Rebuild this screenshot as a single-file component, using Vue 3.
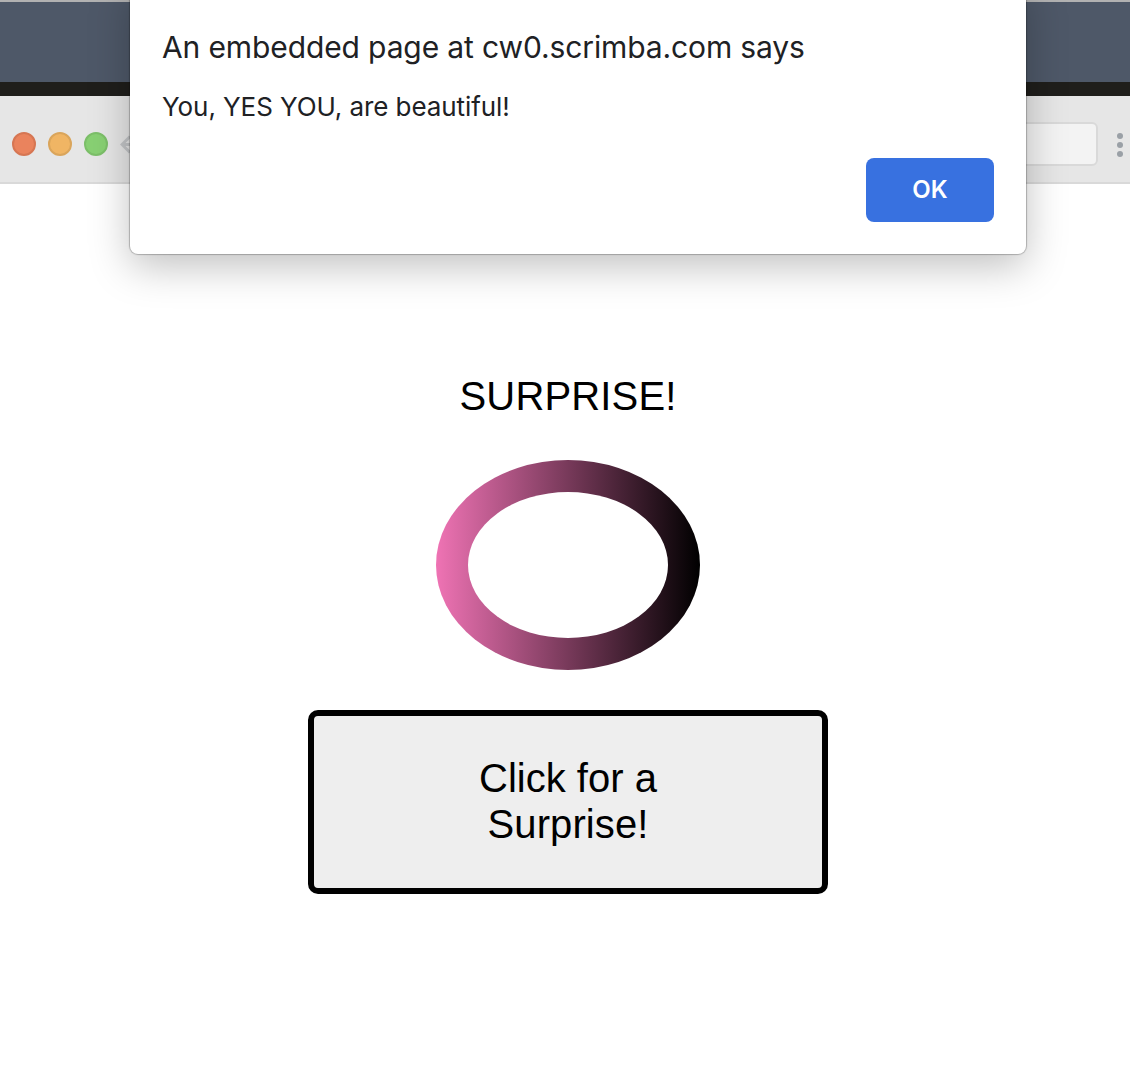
<script setup>
const lights = ['red', 'amber', 'green']
</script>

<template>
  <div class="screen">
    <div class="backdrop"></div>
    <div class="divider"></div>
    <header class="toolbar">
      <div class="lights">
        <span v-for="c in lights" :key="c" class="light" :class="c"></span>
      </div>
      <svg class="back" width="20" height="24" viewBox="0 0 20 24">
        <path d="M10 3.500 L2 11.500 L10 19.500 M2 11.500 H18" fill="none" stroke="#c3c5c7" stroke-width="3" />
      </svg>
      <div class="address"></div>
      <svg class="more" width="6" height="24" viewBox="0 0 6 24">
        <circle cx="3" cy="3" r="3" />
        <circle cx="3" cy="12" r="3" />
        <circle cx="3" cy="21" r="3" />
      </svg>
    </header>
    <main class="page">
      <h1 class="title">SURPRISE!</h1>
      <div class="ring"><div class="hole"></div></div>
      <button class="surprise"><span>Click for a</span><span class="second">Surprise!</span></button>
    </main>
    <div class="dialog" role="alertdialog">
      <div class="heading">An embedded page at cw0.scrimba.com says</div>
      <div class="message">You, YES YOU, are beautiful!</div>
      <button class="ok">OK</button>
    </div>
  </div>
</template>

<style>
body {
  margin: 0;
  background: #fff;
}
</style>

<style scoped>
.screen {
  position: relative;
  width: 1130px;
  height: 1072px;
  overflow: hidden;
  display: flex;
  flex-direction: column;
  box-sizing: border-box;
  background: #fff;
  font-family: "Liberation Sans", Arial, sans-serif;
}
.backdrop {
  height: 80px;
  flex: none;
  border-top: 2px solid #b2b2b2;
  background: #4e5868;
}
.divider {
  height: 14px;
  flex: none;
  background: #1f1e1b;
}
.toolbar {
  height: 88px;
  flex: none;
  box-sizing: border-box;
  display: flex;
  align-items: center;
  padding: 0 7px 0 12px;
  border-bottom: 2px solid #d9d9d9;
  background: #e6e6e6;
}
.lights {
  display: flex;
  gap: 12px;
  padding-top: 10px;
}
.light {
  width: 24px;
  height: 24px;
  box-sizing: border-box;
  border-radius: 50%;
  border: 2px solid;
}
.red { background: #ea835d; border-color: #d67653; }
.amber { background: #f0b564; border-color: #daa55b; }
.green { background: #88d073; border-color: #7cbf69; }
.back {
  margin: 12px 0 0 12px;
  flex: none;
}
.address {
  flex: 1;
  height: 44px;
  margin: 10px 19px 0 20px;
  box-sizing: border-box;
  border: 2px solid #d9d9d9;
  border-radius: 6px;
  background: #f3f3f3;
}
.more {
  margin-top: 12px;
  flex: none;
  fill: #9aa0a6;
}
.page {
  flex: 1;
  display: flex;
  flex-direction: column;
  align-items: center;
  padding: 189px 0 0 6px;
}
.title {
  margin: 0;
  height: 46px;
  font-size: 40px;
  line-height: 46px;
  font-weight: 400;
  letter-spacing: 0.15px;
  color: #000;
}
.ring {
  width: 264px;
  height: 210px;
  margin-top: 41px;
  box-sizing: border-box;
  padding: 32px;
  border-radius: 50%;
  background: linear-gradient(to right, #ef73b4, #000);
}
.hole {
  height: 100%;
  border-radius: 50%;
  background: #fff;
}
.surprise {
  width: 520px;
  height: 184px;
  margin-top: 40px;
  padding: 0 0 2px;
  box-sizing: border-box;
  display: flex;
  flex-direction: column;
  align-items: center;
  justify-content: center;
  border: 6px solid #000;
  border-radius: 10px;
  background: #eee;
  color: #000;
  font: 40px/46px "Liberation Sans", Arial, sans-serif;
}
.second {
  letter-spacing: 0.1px;
}
.dialog {
  position: absolute;
  left: 130px;
  top: -20px;
  width: 896px;
  height: 274px;
  box-sizing: border-box;
  padding: 49px 32px 32px;
  display: flex;
  flex-direction: column;
  border-radius: 8px;
  background: #fff;
  box-shadow: 0 0 1px 1px rgba(0, 0, 0, 0.24), 0 12px 40px rgba(0, 0, 0, 0.25);
  color: #202124;
  font-family: Inter, Roboto, sans-serif;
}
.heading {
  height: 36px;
  font-size: 30px;
  line-height: 36px;
  letter-spacing: -0.12px;
  white-space: nowrap;
}
.message {
  height: 32px;
  margin-top: 26px;
  font-size: 26px;
  line-height: 32px;
  letter-spacing: -0.08px;
  white-space: nowrap;
}
.ok {
  width: 128px;
  height: 64px;
  margin-top: auto;
  align-self: flex-end;
  padding: 0;
  border: 0;
  border-radius: 8px;
  background: #3871e0;
  color: #fff;
  font: 600 24px/64px Inter, Roboto, sans-serif;
}
</style>
